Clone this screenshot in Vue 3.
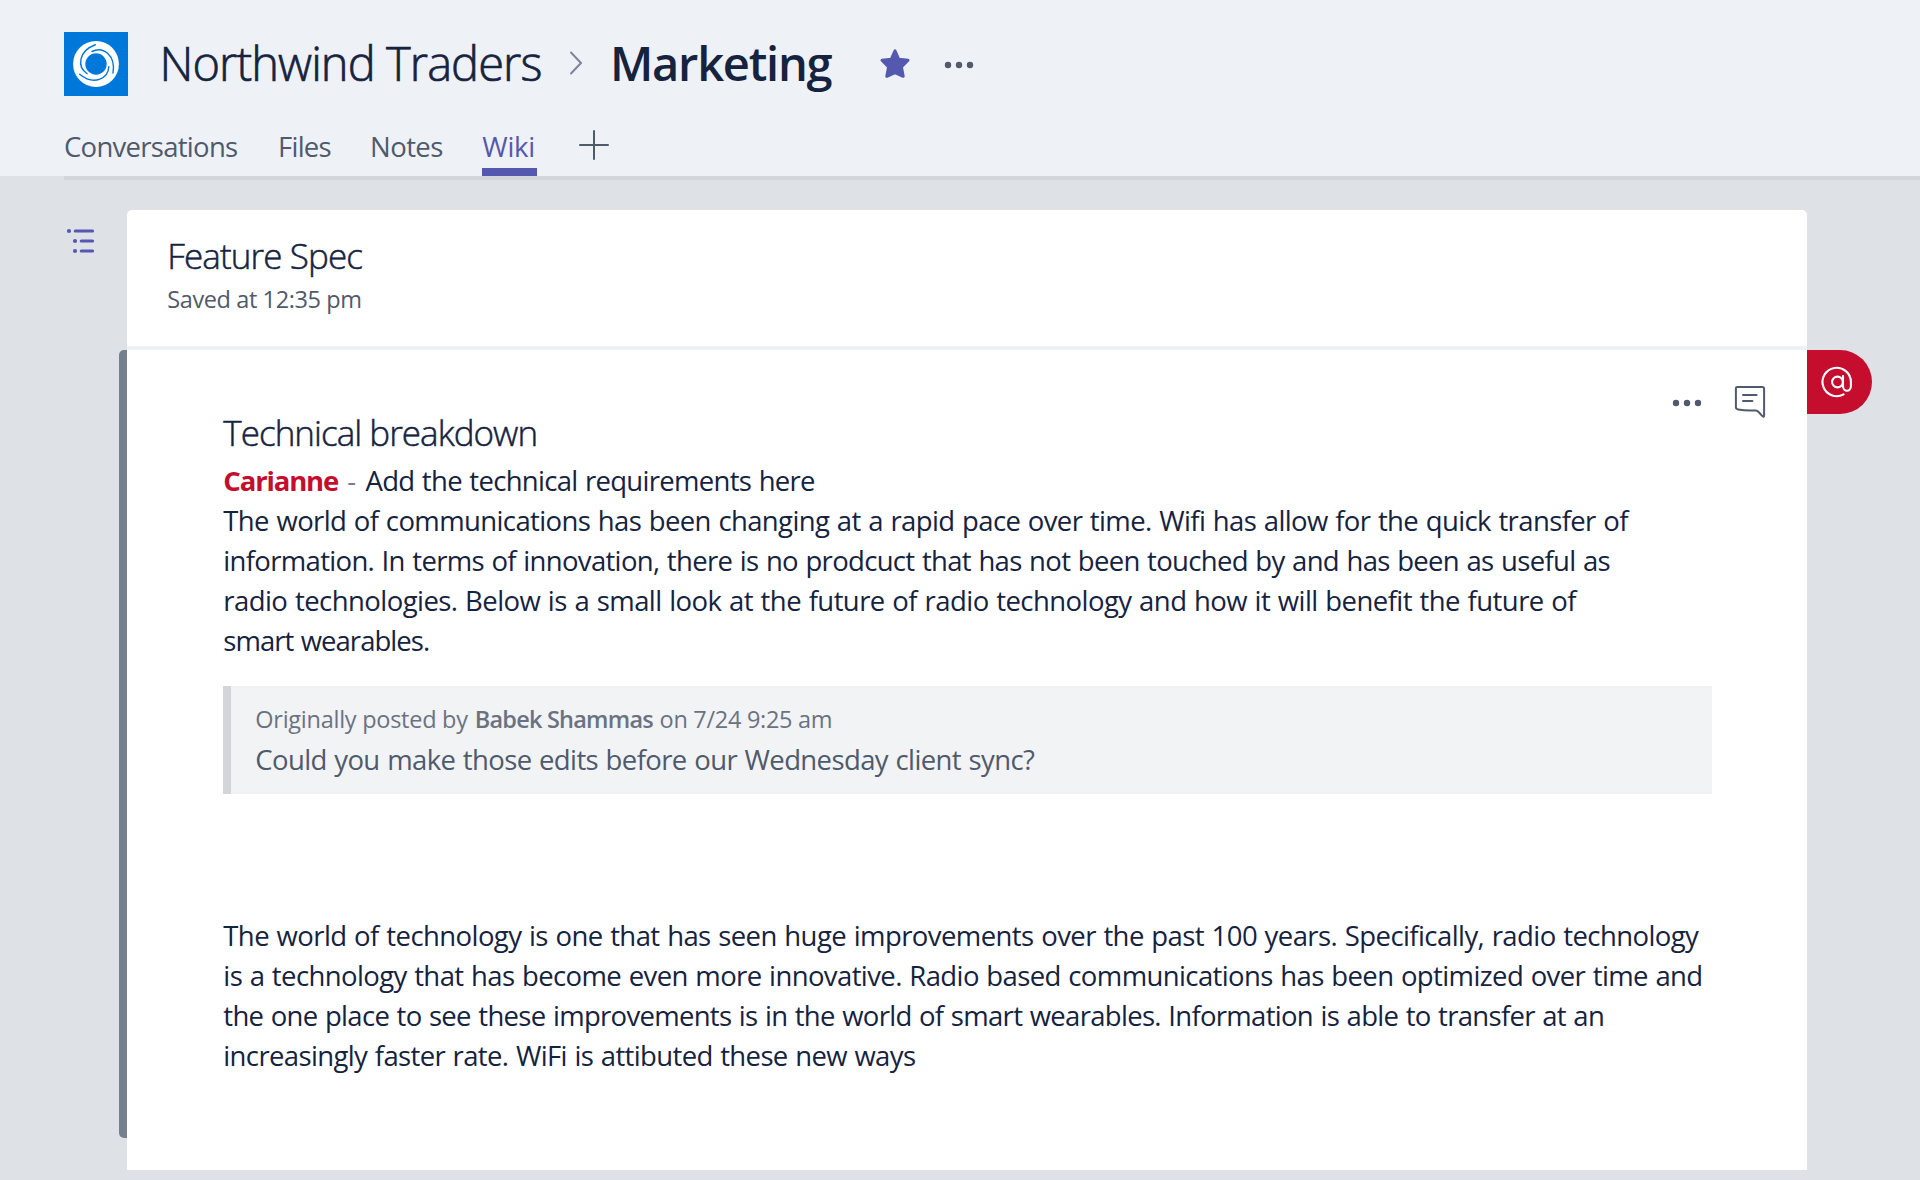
<script setup>
const tabs = [
  { name: 'Conversations', ls: -0.72 },
  { name: 'Files', ls: -0.75 },
  { name: 'Notes', ls: -0.56 },
  { name: 'Wiki', ls: -0.29, active: true },
]

// Lines are broken explicitly; each one carries its own tracking in px.
const intro = [
  { text: 'The world of communications has been changing at a rapid pace over time. Wifi has allow for the quick transfer of', ls: -0.614 },
  { text: 'information. In terms of innovation, there is no prodcuct that has not been touched by and has been as useful as', ls: -0.676 },
  { text: 'radio technologies. Below is a small look at the future of radio technology and how it will benefit the future of', ls: -0.558 },
  { text: 'smart wearables.', ls: -0.947 },
]
const closing = [
  { text: 'The world of technology is one that has seen huge improvements over the past 100 years. Specifically, radio technology', ls: -0.578 },
  { text: 'is a technology that has become even more innovative. Radio based communications has been optimized over time and', ls: -0.61 },
  { text: 'the one place to see these improvements is in the world of smart wearables. Information is able to transfer at an', ls: -0.699 },
  { text: 'increasingly faster rate. WiFi is attibuted these new ways', ls: -0.63 },
]
const track = (ls) => ({ letterSpacing: ls + 'px' })
</script>

<template>
  <div class="app">
    <header class="header">
      <div class="crumbs">
        <svg class="logo" viewBox="-32 -32 64 64">
          <rect x="-32" y="-32" width="64" height="64" fill="#0078d9" />
          <circle r="16.8" fill="none" stroke="#fff" stroke-width="12.2" />
          <g fill="none" stroke="#0078d9" stroke-width="1.4" stroke-linecap="round">
            <path v-for="a in [0, 120, 240]" :key="a" :transform="`rotate(${a})`" d="M-4-12.5C7-18 20-9 17 9" />
          </g>
        </svg>
        <h1 class="team">Northwind Traders</h1>
        <svg class="chevron" viewBox="0 0 14 26"><path d="M2 2.5 12 13 2 23.5" /></svg>
        <h1 class="channel">Marketing</h1>
        <svg class="star" viewBox="0 0 32 32">
          <path d="M16 2.8 19.7 11.2 29 12.3 22.4 18.9 24.2 28.3 16 24.6 7.8 28.3 9.6 18.9 3 12.3 12.3 11.2Z" />
        </svg>
        <svg class="dots" viewBox="0 0 30 8"><circle cx="4" cy="4" r="3.2" /><circle cx="15" cy="4" r="3.2" /><circle cx="26" cy="4" r="3.2" /></svg>
      </div>
      <nav class="tabs">
        <div v-for="t in tabs" :key="t.name" class="cell">
          <a class="tab" :class="{ active: t.active }"><span :style="track(t.ls)">{{ t.name }}</span></a>
        </div>
        <svg class="plus" viewBox="0 0 30 30"><path d="M15 1v28M1 15h28" /></svg>
      </nav>
    </header>
    <div class="rule"></div>

    <main class="main">
      <aside class="rail">
        <svg class="outline" viewBox="0 0 30 26">
          <g fill="#5558af"><circle cx="3" cy="3" r="2.1" /><circle cx="9" cy="13" r="2.1" /><circle cx="9" cy="23" r="2.1" /></g>
          <path d="M9.2 3H26.6M15.2 13H26.6M15.2 23H26.6" stroke="#5558af" stroke-width="3" stroke-linecap="round" />
        </svg>
        <div class="marker"></div>
      </aside>
      <article class="card">
        <div class="card-head">
          <h2 class="spec">Feature Spec</h2>
          <p class="saved">Saved at 12:35 pm</p>
        </div>
        <section class="card-body">
          <div class="actions">
            <svg class="dots" viewBox="0 0 30 8"><circle cx="4" cy="4" r="3.2" /><circle cx="15" cy="4" r="3.2" /><circle cx="26" cy="4" r="3.2" /></svg>
            <svg class="comment" viewBox="0 0 32 34">
              <path d="M3.2 1.9H28.2Q30.1 1.9 30.1 3.8V30.5Q30.1 32.6 28.4 31.1L24.6 27Q23.2 25.3 21.4 25.4C15 25.8 10 25.6 4.3 24.6Q1.9 24 1.9 22.3V3.3Q1.9 1.9 3.2 1.9Z" />
              <path d="M9 10H22.6M9 16H18.4" />
            </svg>
          </div>
          <h3 class="title">Technical breakdown</h3>
          <div class="line"><b class="mention">Carianne</b><span class="dash">-</span><span class="ask">Add the technical requirements here</span></div>
          <div v-for="l in intro" :key="l.text" class="line" :style="track(l.ls)">{{ l.text }}</div>
          <blockquote class="quote">
            <div class="by"><span class="orig">Originally posted by</span><b class="author">Babek Shammas</b><span class="when">on 7/24 9:25 am</span></div>
            <div class="said">Could you make those edits before our Wednesday client sync?</div>
          </blockquote>
          <div v-for="l in closing" :key="l.text" class="line" :style="track(l.ls)">{{ l.text }}</div>
        </section>
      </article>
      <div class="badge">
        <svg viewBox="0 0 64 64"><path d="M36.6 44.4A14.2 14.2 0 1 1 43.9 32V36C43.9 42.4 36 42.4 36 36V26" /><circle cx="30.5" cy="32" r="5.4" /></svg>
      </div>
    </main>
  </div>
</template>

<style>
body {
  margin: 0;
  background: #dee1e6;
}
</style>

<style scoped>
.app {
  width: 1920px;
  height: 1180px;
  overflow: hidden;
  display: flex;
  flex-direction: column;
  background: #dee1e6;
  color: #16233f;
  font-family: "Open Sans", "Noto Sans", sans-serif;
  font-size: 27.5px;
  white-space: nowrap;
}
svg { display: block; flex: none; }
h1, h2, h3, p { margin: 0; font-weight: 300; }

.header {
  height: 176px;
  box-sizing: border-box;
  padding: 32px 0 0 64px;
  background: #eef1f6;
  display: flex;
  flex-direction: column;
  justify-content: space-between;
}
.crumbs { display: flex; align-items: flex-start; height: 64px; }
.logo { width: 64px; height: 64px; }
.team, .channel { font-size: 47px; line-height: 62px; }
.team { width: 409.5px; padding-left: 31.5px; letter-spacing: -0.92px; -webkit-text-stroke: 0.7px currentColor; }
.chevron { width: 14px; height: 26px; margin-top: 18px; fill: none; stroke: #7f8497; stroke-width: 2; stroke-linecap: round; }
.channel { width: 245px; margin-left: 27px; font-weight: 600; letter-spacing: -1.23px; }
.star { width: 32px; height: 32px; margin: 16px 0 0 24px; fill: #5558af; stroke: #5558af; stroke-width: 3; stroke-linejoin: round; }
.dots { width: 30px; height: 8px; fill: #4f5a6c; }
.crumbs .dots { margin: 29px 0 0 33px; }

.tabs {
  height: 50px;
  display: grid;
  grid-template-columns: 214px 92px 112.3px 96.7px 30px;
  color: #4f5a6c;
  line-height: 42px;
}
.cell { display: flex; }
.tab { display: flex; box-sizing: border-box; height: 50px; }
.tab.active { width: 55px; color: #5558af; border-bottom: 8px solid #5558af; }
.plus { width: 30px; height: 30px; margin-top: 4px; stroke: #4f5a6c; stroke-width: 2; stroke-linecap: round; }
.rule { height: 4px; margin-left: 64px; background: #d3d7dc; }

.main { display: flex; flex: 1; padding-top: 30px; }
.rail { width: 127.3px; display: flex; flex-direction: column; align-items: flex-end; }
.outline { width: 30px; height: 26px; margin: 18px 31.3px 0 0; }
.marker { width: 8px; height: 788px; margin-top: 96px; background: #767f8e; border-radius: 5px 0 0 5px; }
.card { width: 1680px; height: 960px; background: #fff; border-radius: 5px 5px 0 0; }
.card-head { box-sizing: border-box; height: 140px; padding: 21px 0 0 40px; border-bottom: 4px solid #edf0f6; }
.spec { font-size: 35px; line-height: 50px; letter-spacing: -0.9px; -webkit-text-stroke: 0.5px currentColor; }
.saved { font-size: 23.5px; font-weight: 400; line-height: 36px; letter-spacing: -0.4px; color: #4f5a6c; }

.card-body { padding: 36px 96px 0; }
.actions { display: flex; align-items: flex-start; justify-content: flex-end; height: 20px; margin-right: -56px; }
.actions .dots { margin-top: 13px; }
.comment { width: 32px; height: 34px; margin: -1px 1px 0 32px; fill: none; stroke: #4f5a6c; stroke-width: 2; stroke-linecap: round; stroke-linejoin: round; }
.title { font-size: 35px; line-height: 54px; height: 55px; letter-spacing: -0.96px; -webkit-text-stroke: 0.5px currentColor; }
.line { height: 40px; line-height: 40px; word-spacing: 1px; }
.mention { display: inline-block; width: 124px; color: #c50e2e; font-weight: 700; letter-spacing: -1.15px; }
.dash { display: inline-block; width: 18.2px; color: #767f8e; }
.ask { letter-spacing: -0.7px; }
.quote {
  box-sizing: border-box;
  height: 108px;
  margin: 25px 0 122px;
  padding: 14px 0 0 24px;
  border-left: 8px solid #d3d5da;
  background: #f2f3f5;
  width: 1488.5px;
  color: #4f5a6c;
}
.by { display: flex; height: 40px; line-height: 39px; font-size: 23.5px; color: #6a7282; }
.orig { width: 219.5px; letter-spacing: -0.26px; }
.author { width: 184.8px; font-weight: 600; letter-spacing: -0.78px; }
.when { letter-spacing: -0.3px; }
.said { line-height: 40px; letter-spacing: -0.614px; word-spacing: 1px; }

.badge { width: 64.7px; height: 64px; margin-top: 140px; background: #c50e2e; border-radius: 0 32px 32px 0; }
.badge svg { width: 64px; height: 64px; fill: none; stroke: #fff; stroke-width: 2.1; stroke-linecap: round; }
</style>
